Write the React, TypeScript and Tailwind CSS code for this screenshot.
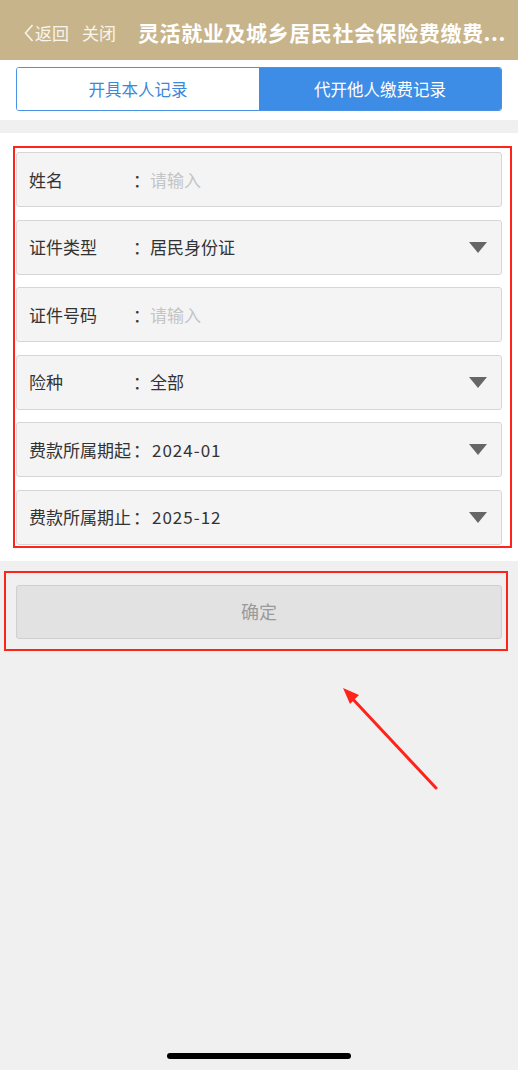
import React from "react";

const font = { fontFamily: '"Noto Sans CJK SC", "Noto Sans", sans-serif' };

function Caret() {
  return (
    <svg width="18" height="11" viewBox="0 0 18 11" className="shrink-0">
      <path d="M0 0 H18 L9 11 Z" fill="#666666" />
    </svg>
  );
}

type Field = { label: string; value: string; placeholder?: boolean; select?: boolean; digits?: boolean };

const fields: Field[] = [
  { label: "姓名", value: "请输入", placeholder: true },
  { label: "证件类型", value: "居民身份证", select: true },
  { label: "证件号码", value: "请输入", placeholder: true },
  { label: "险种", value: "全部", select: true },
  { label: "费款所属期起", value: "2024-01", select: true, digits: true },
  { label: "费款所属期止", value: "2025-12", select: true, digits: true },
];

export default function App() {
  return (
    <div
      className="relative w-[518px] h-[1070px] bg-[#f0f0f0] overflow-hidden"
      style={font}
    >
      {/* Header */}
      <div className="h-[60px] bg-[#c8b48b] flex items-center pt-[6px] pl-[24px] text-white">
        <div className="flex items-center text-[17px] text-[#f8f4ec]">
          <svg width="10" height="18" viewBox="0 0 10 18" className="mr-[1px]">
            <path d="M8.5 1 L1.5 9 L8.5 17" stroke="#f8f4ec" strokeWidth="1.6" fill="none" />
          </svg>
          <span>返回</span>
          <span className="ml-[13px]">关闭</span>
        </div>
        <div className="ml-[22px] text-[21px] font-bold tracking-[0.6px] whitespace-nowrap">
          灵活就业及城乡居民社会保险费缴费...
        </div>
      </div>

      {/* Tabs */}
      <div className="bg-white pt-[7px] pb-[9px] px-[16px]">
        <div className="flex h-[44px] border border-[#4a92e3] rounded-[3px] overflow-hidden">
          <div className="flex-1 flex items-center justify-center text-[16.5px] text-[#3c87d8] bg-white">
            开具本人记录
          </div>
          <div className="flex-1 flex items-center justify-center text-[16.5px] text-white bg-[#3d8de6]">
            代开他人缴费记录
          </div>
        </div>
      </div>

      <div className="h-[13px]" />

      {/* Form */}
      <div className="relative bg-white pt-[19px] pb-[16px] px-[16px]">
        <div className="flex flex-col gap-[12.5px]">
          {fields.map((f) => (
            <div
              key={f.label}
              className="h-[55px] flex items-center bg-[#f4f4f4] border border-[#d6d6d6] rounded-[3px] pl-[12px] pr-[14px] text-[17px] text-[#333333]"
            >
              <span className="w-[104px] whitespace-nowrap">{f.label}</span>
              <span className="w-[17px] text-center">：</span>
              <span
                className={
                  f.placeholder
                    ? "flex-1 text-[#c4c4c4]"
                    : f.digits
                    ? "flex-1 pl-[2px] tracking-[1px]"
                    : "flex-1"
                }
              >
                {f.value}
              </span>
              {f.select && <Caret />}
            </div>
          ))}
        </div>
        {/* annotation */}
        <div className="absolute left-[13px] top-[13px] w-[499px] h-[402px] border-[2.5px] border-[#ff2419] pointer-events-none" />
      </div>

      {/* Button */}
      <div className="relative px-[16px] pt-[24px]">
        <div className="h-[54px] flex items-center justify-center bg-[#e2e2e2] border border-[#cfcfcf] rounded-[3px] text-[18px] text-[#9a9a9a]">
          确定
        </div>
        <div className="absolute left-[4px] top-[10px] w-[504px] h-[80px] border-[2.5px] border-[#ff2419] pointer-events-none" />
      </div>

      {/* Arrow annotation */}
      <svg
        className="absolute left-[330px] top-[675px]"
        width="120"
        height="125"
        viewBox="0 0 120 125"
      >
        <path d="M106 113 L19 20" stroke="#ff2419" strokeWidth="3" strokeLinecap="round" />
        <path d="M13 13 L29 20 L20 29 Z" fill="#ff2419" />
      </svg>

      {/* Home indicator */}
      <div className="absolute left-[167px] top-[1053px] w-[184px] h-[6px] rounded-full bg-black" />
    </div>
  );
}
